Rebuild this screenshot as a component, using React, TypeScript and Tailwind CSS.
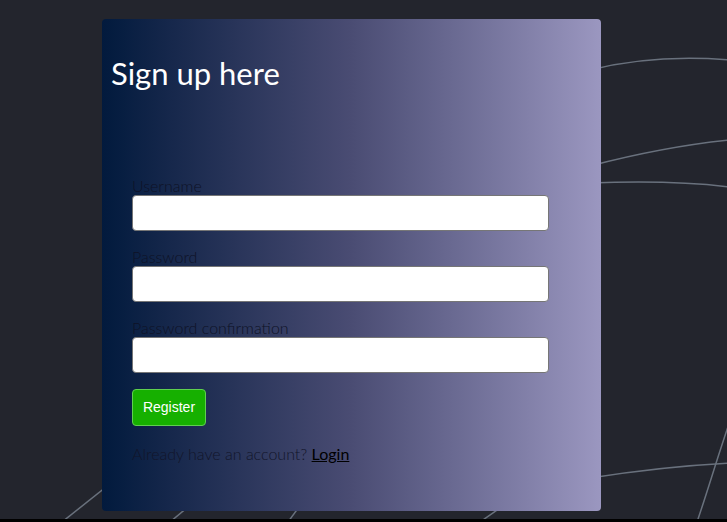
import React from 'react';

const Field = ({ label, type }: { label: string; type: string }) => (
  <div className="flex flex-col">
    <label className="text-[16px] leading-[19px] text-[#0e1226] font-light">{label}</label>
    <input
      type={type}
      className="h-[36px] w-[417px] rounded-[4px] border border-[#767676] bg-white px-2"
    />
  </div>
);

const Lines = () => (
  <svg
    className="absolute inset-0 h-full w-full"
    viewBox="0 0 727 519"
    fill="none"
    stroke="#69717d"
    strokeWidth="1.5"
  >
    <path d="M590 70 C630 60 680 56 730 60" />
    <path d="M590 166 C640 153 690 144 730 140" />
    <path d="M590 183 C640 181 690 182 730 187" />
    <path d="M590 478 C640 470 690 465 730 463" />
    <path d="M697 522 C708 490 718 455 732 415" />
    <path d="M62 522 L150 452" />
    <path d="M170 522 L200 497" />
    <path d="M288 522 L310 492" />
    <path d="M480 522 L520 494" />
  </svg>
);

export default function App() {
  return (
    <div className="h-[522px] w-[727px] overflow-hidden bg-black" style={{ fontFamily: 'Lato, "Open Sans", sans-serif' }}>
      <div className="relative h-[519px] bg-[#23252d] pt-[19px] pl-[102px]">
        <Lines />
        <div className="relative h-[492px] w-[499px] rounded-[4px] bg-gradient-to-r from-[#021a3d] via-[#4a4c73] to-[#9b97c0]">
          <h1 className="pl-[9px] pt-[34px] text-[31px] leading-[40px] text-white">Sign up here</h1>
          <form className="mt-[83px] ml-[30px] flex flex-col gap-[16px]" onSubmit={(e) => e.preventDefault()}>
            <Field label="Username" type="text" />
            <Field label="Password" type="password" />
            <Field label="Password confirmation" type="password" />
            <div>
              <button
                type="submit"
                className="h-[37px] w-[74px] rounded-[4px] border border-[#5fd04f] bg-[#16b000] text-[14px] text-white"
                style={{ fontFamily: '"Liberation Sans", Arial, sans-serif' }}
              >
                Register
              </button>
            </div>
            <p className="mt-[2px] text-[16px] leading-[20px] font-light text-[#12152a]">
              Already have an account?{' '}
              <a href="#" className="font-normal text-black underline">
                Login
              </a>
            </p>
          </form>
        </div>
      </div>
    </div>
  );
}
